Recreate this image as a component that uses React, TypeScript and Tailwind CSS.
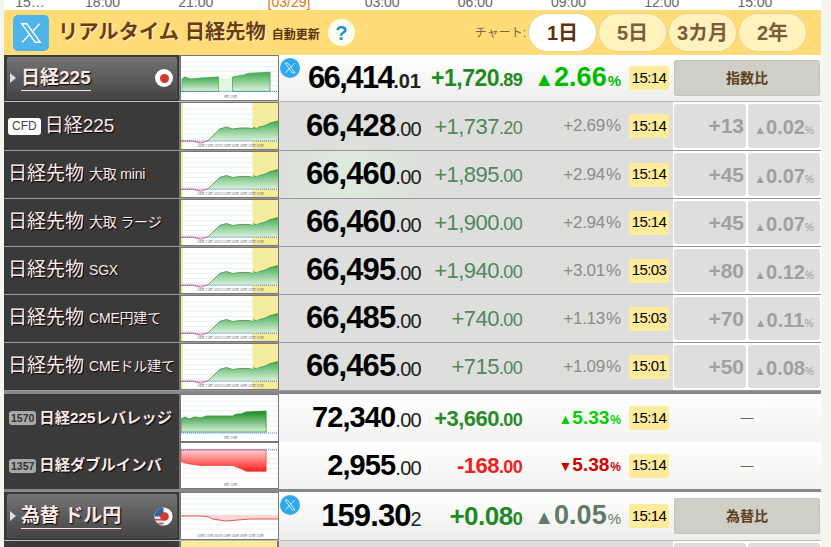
import { ReactNode } from 'react';

const SANS = 'font-["Liberation_Sans","Noto_Sans_CJK_JP",sans-serif]';

function XIcon({ className }: { className: string }) {
  return (
    <svg viewBox="0 0 24 24" className={className} fill="none" stroke="currentColor" strokeWidth="1.3">
      <path d="M3.5 3.5h4.6l12.4 17h-4.6z" />
      <path d="M20 3.5l-7 7.6M4 20.5l7.2-7.8" />
    </svg>
  );
}

function XBadge() {
  return (
    <span className="absolute left-[1px] top-[3px] flex h-[20px] w-[20px] items-center justify-center rounded-full bg-[#2fa9ee] text-white">
      <XIcon className="h-[14px] w-[14px]" />
    </span>
  );
}

const TICKS = ['18:00', '21:00', '[03/29]', '03:00', '06:00', '09:00', '12:00', '15:00'];

function Timeline() {
  return (
    <div className="h-[10px] overflow-hidden bg-white">
      <div className="flex -translate-y-[6px] text-[14px] leading-[16px] text-[#666]">
        <span className="w-[52px] shrink-0 text-center">15…</span>
        {TICKS.map((t) => (
          <span key={t} className={`w-[93.2px] shrink-0 text-center ${t.startsWith('[') ? 'text-[#e8760a]' : ''}`}>
            {t}
          </span>
        ))}
      </div>
    </div>
  );
}

function Header() {
  const ranges = ['1日', '5日', '3カ月', '2年'];
  return (
    <div className="flex h-[45px] items-center bg-[#ffdc78] pl-[9px] pr-[14px]">
      <span className="flex h-[36px] w-[36px] items-center justify-center rounded-[5px] bg-[#4fb4ea] text-white">
        <XIcon className="h-[26px] w-[26px]" />
      </span>
      <span className="ml-[9px] text-[20.3px] font-bold text-[#6b3d0e] [text-shadow:1px_1px_1px_#fff3c8]">リアルタイム 日経先物</span>
      <span className="ml-[6px] mt-[5px] text-[12px] font-bold text-[#5a3410]">自動更新</span>
      <span className="ml-[8px] flex h-[27px] w-[27px] items-center justify-center rounded-full bg-[#fffdf0] text-[20px] font-bold text-[#1596d2]">?</span>
      <span className="ml-auto mr-[2px] text-[12px] text-[#7d6440]">チャート:</span>
      <div className="flex gap-[1px]">
        {ranges.map((r, i) => (
          <span
            key={r}
            className={`flex h-[39px] w-[69px] items-center justify-center rounded-full border border-[#ecd089] text-[20px] font-bold ${i === 0 ? 'bg-white text-[#5c3310]' : 'bg-[#fff2bd] text-[#7a5c3c]'}`}
          >
            {r}
          </span>
        ))}
      </div>
    </div>
  );
}

type ChartKind = 'idx' | 'fut' | 'up' | 'down' | 'fx';

const FUT_LINE = 'M26 38 L28 37 L32 33 L36 29 L39 26 L46 24 L52 26 L60 25 L69 25 L72 26 L74 24 L76 26 L79 24 L84 23 L90 20 L98 18';
const UP_LINE = 'M0 24 L4 22 L8 24 L14 22 L20 23 L26 21 L52 21 L56 19 L60 19 L66 17 L86 16';
const DOWN_LINE = 'M0 19 L6 21 L12 22 L20 23 L30 23 L52 23 L60 26 L66 29 L86 29';

function Chart({ kind }: { kind: ChartKind }) {
  const grid = [6, 11, 16, 21, 26, 31, 36];
  const yellow = kind === 'fut';
  const gridColor = kind === 'down' ? '#ffdede' : '#dcefdc';
  return (
    <svg viewBox="0 0 98 46" preserveAspectRatio="none" className="h-full w-full bg-white">
      <defs>
        <linearGradient id="gr" x1="0" y1="0" x2="0" y2="1">
          <stop offset="0" stopColor="#43ab52" />
          <stop offset="1" stopColor="#dcf2dc" />
        </linearGradient>
        <linearGradient id="dg" x1="0" y1="0" x2="0" y2="1">
          <stop offset="0" stopColor="#158a20" />
          <stop offset="1" stopColor="#d8f0d8" />
        </linearGradient>
        <linearGradient id="rd" x1="0" y1="0" x2="0" y2="1">
          <stop offset="0" stopColor="#ffd0d0" />
          <stop offset="1" stopColor="#ff2020" />
        </linearGradient>
      </defs>
      {yellow && <rect x="0" width="2" height="46" fill="#f8ec96" />}
      {yellow && <rect x="72" width="26" height="46" fill="#f8ec96" />}
      {grid.map((y) => (
        <line key={y} x1="0" x2="98" y1={y} y2={y} stroke={gridColor} strokeWidth="0.7" />
      ))}
      {kind === 'idx' && (
        <>
          <path d="M1 37 L1 24 L4 22 L10 24 L20 23 L38 22 L38 37 Z" fill="url(#gr)" stroke="#3d9a4a" strokeWidth="0.7" />
          <rect x="39" y="23" width="13" height="14" fill="#e2f8de" />
          <path d="M52 37 L52 22 L62 20 L69 18 L90 17 L90 37 Z" fill="url(#gr)" stroke="#3d9a4a" strokeWidth="0.7" />
          <line x1="0" x2="98" y1="37" y2="37" stroke="#2f6fe8" strokeWidth="1" strokeDasharray="1 1" />
        </>
      )}
      {kind === 'fut' && (
        <>
          <path d={`${FUT_LINE} L98 38 L26 38 Z`} fill="url(#gr)" />
          <path d={FUT_LINE} fill="none" stroke="#3d8a4a" strokeWidth="0.8" />
          <path d="M0 38 L12 38 L20 40 L26 38" fill="none" stroke="#ee3030" strokeWidth="0.8" />
          <line x1="0" x2="98" y1="38" y2="38" stroke="#2f6fe8" strokeWidth="1" strokeDasharray="1 1" />
        </>
      )}
      {kind === 'up' && (
        <>
          <path d={`${UP_LINE} L86 37 L0 37 Z`} fill="url(#dg)" stroke="#2b9a35" strokeWidth="0.8" />
          <line x1="0" x2="98" y1="38" y2="38" stroke="#2f6fe8" strokeWidth="1" strokeDasharray="1 1" />
        </>
      )}
      {kind === 'down' && (
        <>
          <path d={`${DOWN_LINE} L86 7 L0 7 Z`} fill="url(#rd)" stroke="#e82a2a" strokeWidth="0.6" />
          <line x1="0" x2="98" y1="7" y2="7" stroke="#2f6fe8" strokeWidth="1" strokeDasharray="1 1" />
        </>
      )}
      {kind === 'fx' && (
        <>
          <path d="M0 23 L20 23 L28 24 L32 26 L45 28 L70 26 L98 26 L98 22 L0 22 Z" fill="#fbd6d6" />
          <path d="M0 23 L20 23 L28 24 L32 26 L45 28 L70 26 L98 26" fill="none" stroke="#d83030" strokeWidth="0.8" />
        </>
      )}
      <text x="50" y="44" fontSize="3.5" fill="#777" textAnchor="middle">
        {kind === 'fut' || kind === 'fx' ? '18時   21時   03/29   03時   06時   09時   12時   15時' : '9時                     15時'}
      </text>
    </svg>
  );
}

function Flag() {
  return (
    <svg viewBox="0 0 20 20" className="h-[19px] w-[19px]">
      <circle cx="10" cy="10" r="9.5" fill="#fff" />
      <path d="M10 .5A9.5 9.5 0 0 0 10 19.5Z" fill="#e8e8ee" />
      <path d="M10 .5A9.5 9.5 0 0 0 .5 10H10Z" fill="#3a5ea8" />
      <path d="M.8 12.5h9.2v1.6H1.4zM3 16.5h7v1.6H5.5z" fill="#d94040" />
      <circle cx="11" cy="10" r="4.6" fill="#d23a30" />
    </svg>
  );
}

function MainName({ label, mark }: { label: string; mark: ReactNode }) {
  return (
    <div className="w-[175px] shrink-0 self-stretch bg-[#3a3a3a] p-[2px] pl-[3px]">
      <div className="flex h-full items-center rounded-[3px] bg-gradient-to-b from-[#747474] to-[#444] pl-[3px] pr-[4px] shadow-[inset_0_0_1px_#999]">
        <span className="h-0 w-0 border-y-[5px] border-l-[6px] border-y-transparent border-l-[#ddd]" />
        <span className="ml-[5px] border-b border-[#fde] text-[19px] font-bold leading-[24px] text-[#fde8e8] [text-shadow:1px_1px_1px_#000]">{label}</span>
        <span className="ml-auto">{mark}</span>
      </div>
    </div>
  );
}

function Name({ main, sub, badge, bold }: { main: string; sub?: string; badge?: string; bold?: boolean }) {
  return (
    <div className="flex w-[175px] shrink-0 items-center self-stretch overflow-hidden whitespace-nowrap bg-[#3a3a3a] pl-[4px] text-[#fdeaea] [text-shadow:1px_1px_1px_#000]">
      {badge === 'CFD' && (
        <span className="mr-[4px] rounded-[3px] bg-white px-[4px] text-[12px] leading-[17px] text-[#444] [text-shadow:none]">CFD</span>
      )}
      {badge && badge !== 'CFD' && (
        <span className="ml-[1px] mr-[3px] rounded-[3px] bg-[#a8a8a8] px-[2px] text-[10.5px] font-bold leading-[14px] text-[#333] [text-shadow:none]">{badge}</span>
      )}
      <span className={bold ? 'text-[15.3px] font-bold' : 'text-[19px]'}>{main}</span>
      {sub && <span className="ml-[5px] text-[14px] tracking-[-0.2px]">{sub}</span>}
    </div>
  );
}

function Values({
  price,
  priceDec,
  change,
  changeDec,
  pct,
  arrow,
  time,
  priceSize = 'text-[31px] tracking-[-0.9px]',
  decClass = 'tracking-[-0.7px]',
  changeClass,
  pctClass,
  pctSize,
  signClass,
  glow,
}: {
  price: string;
  priceDec: string;
  change: string;
  changeDec: string;
  pct: string;
  arrow?: string;
  time: string;
  priceSize?: string;
  decClass?: string;
  changeClass: string;
  pctClass: string;
  pctSize: string;
  signClass: string;
  glow?: boolean;
}) {
  return (
    <>
      <div className={`flex h-full w-[142px] shrink-0 items-center justify-end ${glow ? 'bg-gradient-to-r from-[#dededc] via-[#dcebdb] to-[#dededc]' : ''}`}>
        <div className="flex items-baseline">
          <span className={`${priceSize} font-bold text-black`}>{price}</span>
          <span className={`text-[20px] text-[#222] ${decClass}`}>{priceDec}</span>
        </div>
      </div>
      <div className={`flex w-[101px] shrink-0 items-baseline justify-end ${changeClass}`}>
        <span className="tracking-[-0.5px]">{change}</span>
        <span className="text-[18px] tracking-[-0.7px]">{changeDec}</span>
      </div>
      <div className={`flex w-[99px] shrink-0 items-baseline justify-end ${pctClass}`}>
        {arrow && <span className="leading-none">{arrow}</span>}
        <span className={pctSize}>{pct}</span>
        <span className={`ml-[1px] ${signClass}`}>%</span>
      </div>
      <div className="ml-[8px] flex h-[24px] w-[40px] shrink-0 items-center justify-center rounded-[2px] bg-[#ffeb9c] text-[15px] tracking-[-0.6px] text-black">
        {time}
      </div>
    </>
  );
}

function CompareButton({ label }: { label: string }) {
  return (
    <div className="ml-[5px] flex h-[36px] w-[146px] shrink-0 items-center justify-center rounded-[2px] border border-[#c4c4bc] bg-[#cfcfc7] text-[14px] font-bold text-[#5c4020]">
      {label}
    </div>
  );
}

function Diff({ a, b, c }: { a: string; b: string; c: string }) {
  return (
    <div className="ml-[4px] flex h-full shrink-0 items-stretch gap-[2px] bg-white py-[2px] pl-[1px] pr-[1px]">
      <div className="flex w-[72px] items-center justify-end rounded-[3px] bg-[#dedede] pr-[2px] text-[21px] font-bold text-[#a0a0a0]">{a}</div>
      <div className="flex w-[72px] items-baseline justify-center rounded-[3px] bg-[#dedede] pt-[11px] font-bold text-[#a0a0a0]">
        <span className="text-[12px]">▲</span>
        <span className="text-[20px] leading-[24px]">{b}</span>
        <span className="text-[10px] font-normal">{c}</span>
      </div>
    </div>
  );
}

const FUTURES = [
  { main: '日経225', badge: 'CFD', price: '66,428', change: '+1,737', dec: '.20', pct: '+2.69', time: '15:14', a: '+13', b: '0.02', h: 'h-[49px]' },
  { main: '日経先物', sub: '大取 mini', price: '66,460', change: '+1,895', dec: '.00', pct: '+2.94', time: '15:14', a: '+45', b: '0.07', h: 'h-[48px]', glow: true },
  { main: '日経先物', sub: '大取 ラージ', price: '66,460', change: '+1,900', dec: '.00', pct: '+2.94', time: '15:14', a: '+45', b: '0.07', h: 'h-[48px]' },
  { main: '日経先物', sub: 'SGX', price: '66,495', change: '+1,940', dec: '.00', pct: '+3.01', time: '15:03', a: '+80', b: '0.12', h: 'h-[48px]' },
  { main: '日経先物', sub: 'CME円建て', price: '66,485', change: '+740', dec: '.00', pct: '+1.13', time: '15:03', a: '+70', b: '0.11', h: 'h-[48px]' },
  { main: '日経先物', sub: 'CMEドル建て', price: '66,465', change: '+715', dec: '.00', pct: '+1.09', time: '15:01', a: '+50', b: '0.08', h: 'h-[48px]' },
];

function ChartCell({ kind }: { kind: ChartKind }) {
  return (
    <div className="h-full w-[100px] shrink-0 border border-l-[2px] border-[#777] bg-white">
      <Chart kind={kind} />
    </div>
  );
}

export default function App() {
  return (
    <div className={`h-[547px] w-[831px] overflow-hidden bg-[#f3f7ee] pl-[4px] pr-[10px] ${SANS}`}>
      <Timeline />
      <Header />

      <div className="flex h-[47px] items-center border-b border-[#bbb] bg-gradient-to-b from-white to-[#eeeeec]">
        <MainName
          label="日経225"
          mark={
            <span className="flex h-[18px] w-[18px] items-center justify-center rounded-full bg-white">
              <span className="h-[9px] w-[9px] rounded-full bg-[#d03a30]" />
            </span>
          }
        />
        <ChartCell kind="idx" />
        <div className="relative flex h-full items-center">
          <XBadge />
          <Values
            price="66,414"
            priceDec=".01"
            priceSize="text-[31px] tracking-[-1.6px]"
            decClass="font-bold"
            change="+1,720"
            changeDec=".89"
            pct="2.66"
            arrow="▲"
            time="15:14"
            changeClass="text-[23px] font-bold text-[#1f8a24]"
            pctClass="text-[20px] font-bold text-[#00bb00]"
            pctSize="text-[27px] leading-none"
            signClass="text-[15px]"
          />
          <CompareButton label="指数比" />
        </div>
      </div>

      {FUTURES.map((f) => (
        <div key={f.sub ?? f.main} className={`flex items-center border-b border-[#999] bg-[#dededc] ${f.h}`}>
          <Name main={f.main} sub={f.sub} badge={f.badge} />
          <ChartCell kind="fut" />
          <div className="flex h-full items-center">
            <Values
              price={f.price}
              priceDec=".00"
              change={f.change}
              changeDec={f.dec}
              pct={f.pct}
              time={f.time}
              glow={f.glow}
              changeClass="text-[22px] text-[#50875f]"
              pctClass="text-[#8c8c8c]"
              pctSize="text-[17px] tracking-[-0.3px]"
              signClass="text-[17px]"
            />
            <Diff a={f.a} b={f.b} c="%" />
          </div>
        </div>
      ))}

      <div className="h-[3px] bg-[#888]" />

      <div className="flex h-[48px] items-center bg-gradient-to-b from-white to-[#f2f2f0]">
        <Name main="日経225レバレッジ" badge="1570" bold />
        <ChartCell kind="up" />
        <Values
          price="72,340"
          priceDec=".00"
          priceSize="text-[29px] tracking-[-0.9px]"
          change="+3,660"
          changeDec=".00"
          pct="5.33"
          arrow="▲"
          time="15:14"
          changeClass="text-[22px] font-bold text-[#2a8a2a]"
          pctClass="text-[14px] font-bold text-[#00d000]"
          pctSize="text-[19px] leading-none"
          signClass="text-[12px]"
        />
        <div className="ml-[5px] w-[146px] text-center text-[13px] text-[#666]">—</div>
      </div>

      <div className="flex h-[47px] items-center bg-gradient-to-b from-white to-[#f2f2f0]">
        <Name main="日経ダブルインバ" badge="1357" bold />
        <ChartCell kind="down" />
        <Values
          price="2,955"
          priceDec=".00"
          priceSize="text-[29px] tracking-[-0.9px]"
          change="-168"
          changeDec=".00"
          pct="5.38"
          arrow="▼"
          time="15:14"
          changeClass="text-[22px] font-bold text-[#f02020]"
          pctClass="text-[14px] font-bold text-[#d00000]"
          pctSize="text-[19px] leading-none"
          signClass="text-[12px]"
        />
        <div className="ml-[5px] w-[146px] text-center text-[13px] text-[#666]">—</div>
      </div>

      <div className="h-[3px] bg-[#888]" />

      <div className="flex h-[49px] items-center border-b border-[#bbb] bg-gradient-to-b from-white to-[#eeeeec]">
        <MainName label="為替 ドル円" mark={<Flag />} />
        <ChartCell kind="fx" />
        <div className="relative flex h-full items-center">
          <XBadge />
          <Values
            price="159.30"
            priceDec="2"
            change="+0.08"
            changeDec="0"
            pct="0.05"
            arrow="▲"
            time="15:14"
            changeClass="text-[26px] font-bold text-[#1f8a24]"
            pctClass="text-[20px] font-bold text-[#5f7a66]"
            pctSize="text-[27px] leading-none"
            signClass="text-[15px] font-normal"
          />
          <CompareButton label="為替比" />
        </div>
      </div>

      <div className="flex h-[8px] bg-[#dededc]">
        <div className="w-[175px] shrink-0 bg-[#3a3a3a]" />
        <div className="w-[100px] shrink-0 border-x-[2px] border-[#777] bg-[#f8ec96]" />
        <div className="ml-auto flex gap-[2px] bg-white pt-[2px] pl-[1px] pr-[1px]">
          <div className="w-[72px] rounded-t-[3px] bg-[#dedede]" />
          <div className="w-[72px] rounded-t-[3px] bg-[#dedede]" />
        </div>
      </div>
    </div>
  );
}
